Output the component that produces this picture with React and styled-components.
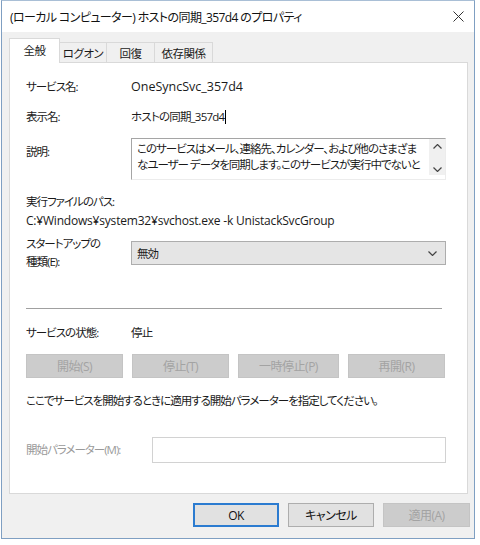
import React from "react";
import styled, { createGlobalStyle } from "styled-components";

const Global = createGlobalStyle`
  html, body { margin: 0; padding: 0; background: #ffffff; }
  body {
    font-family: "Open Sans", "Noto Sans CJK JP", sans-serif;
    font-size: 11.5px;
    font-feature-settings: "palt";
    letter-spacing: -1px;
    color: #1a1a1a;
  }
`;

const Window = styled.div`
  box-sizing: border-box;
  margin-left: 1px;
  width: 474px;
  height: 539px;
  border: 1px solid #7f9fc2;
  border-top-color: #a9bfd6;
  display: flex;
  flex-direction: column;
  background: #fff;
`;

const TitleBar = styled.div`
  height: 31px;
  flex: none;
  display: flex;
  align-items: center;
  justify-content: space-between;
  padding: 0 10px 0 8px;
  font-size: 12px;
  letter-spacing: -0.6px;
  color: #111;
`;

const Body = styled.div`
  flex: 1;
  background: #f0f0f0;
  padding: 7px 6px 0 7px;
  display: flex;
  flex-direction: column;
`;

const TabRow = styled.div`
  display: flex;
  align-items: flex-end;
  height: 24px;
  margin-bottom: -1px;
  position: relative;
  z-index: 1;
`;

const Tab = styled.div`
  box-sizing: border-box;
  height: ${(p) => (p.$active ? 25 : 21)}px;
  width: ${(p) => p.$w}px;
  display: flex;
  align-items: center;
  justify-content: center;
  padding-bottom: ${(p) => (p.$active ? 2 : 0)}px;
  background: ${(p) => (p.$active ? "#ffffff" : "#f0f0f0")};
  border: 1px solid #d9d9d9;
  border-bottom: ${(p) => (p.$active ? "none" : "1px solid #d9d9d9")};
  margin-left: ${(p) => (p.$first ? 0 : -1)}px;
  font-size: 11.5px;
  letter-spacing: -0.5px;
`;

const Panel = styled.div`
  box-sizing: border-box;
  height: 432px;
  background: #ffffff;
  border: 1px solid #d9d9d9;
  padding: 14px 21px 0 16px;
  display: flex;
  flex-direction: column;
`;

const InfoRow = styled.div`
  display: grid;
  grid-template-columns: ${(p) => p.$label || 105}px 1fr;
  align-items: ${(p) => p.$align || "center"};
  min-height: 20px;
  margin-top: ${(p) => p.$mt || 0}px;
`;

const Label = styled.div`
  line-height: 18px;
  padding-top: ${(p) => p.$pt || 0}px;
  color: ${(p) => (p.$disabled ? "#9a9a9a" : "inherit")};
`;

const Value = styled.div`
  line-height: 18px;
  display: flex;
  align-items: center;
  font-size: ${(p) => (p.$latin ? 12.5 : 11.5)}px;
  letter-spacing: ${(p) => (p.$latin ? "0" : "-0.8px")};
`;

const Caret = styled.span`
  display: inline-block;
  width: 1px;
  height: 14px;
  background: #000;
  margin-left: 1px;
`;

const TextBox = styled.div`
  box-sizing: border-box;
  height: 42px;
  display: flex;
  border-top: 1px solid #a5a5a5;
  border-left: 1px solid #a5a5a5;
  border-right: 1px solid #ececec;
  border-bottom: 1px solid #ececec;
`;

const TextContent = styled.div`
  flex: 1;
  padding: 2px 4px 0 5px;
  line-height: 16px;
  white-space: nowrap;
  overflow: hidden;
`;

const ScrollCol = styled.div`
  width: 16px;
  height: 36px;
  background: #f0f0f0;
  display: flex;
  flex-direction: column;
  align-items: center;
  justify-content: space-between;
  padding: 5px 0 3px;
  box-sizing: border-box;
`;

const Line = styled.div`
  line-height: 18px;
  margin-top: ${(p) => p.$mt || 0}px;
  font-size: ${(p) => (p.$latin ? 12 : 11.5)}px;
  letter-spacing: ${(p) => (p.$latin ? "-0.2px" : "-1px")};
  white-space: nowrap;
`;

const Select = styled.div`
  box-sizing: border-box;
  height: 24px;
  background: #e5e5e5;
  border: 1px solid #adadad;
  display: flex;
  align-items: center;
  justify-content: space-between;
  padding: 0 8px 0 5px;
`;

const Separator = styled.div`
  height: 1px;
  width: 416px;
  background: #a0a0a0;
  margin-top: ${(p) => p.$mt}px;
`;

const ButtonRow = styled.div`
  display: flex;
  gap: 9px;
  margin-top: ${(p) => p.$mt || 0}px;
`;

const Button = styled.div`
  box-sizing: border-box;
  width: ${(p) => p.$w}px;
  height: 24px;
  display: flex;
  align-items: center;
  justify-content: center;
  font-size: 12px;
  letter-spacing: -0.5px;
  background: ${(p) => (p.$disabled ? "#cccccc" : "#e1e1e1")};
  color: ${(p) => (p.$disabled ? "#a3a3a3" : "#111")};
  border: ${(p) =>
    p.$default
      ? "2px solid #2b7bd0"
      : p.$disabled
      ? "1px solid #c4c4c4"
      : "1px solid #adadad"};
`;

const Input = styled.div`
  box-sizing: border-box;
  height: 26px;
  border: 1px solid #d2d2d2;
  background: #fff;
`;

const Footer = styled.div`
  display: flex;
  justify-content: flex-end;
  gap: 9px;
  margin: 9px -2px 0 0;
`;

const CloseIcon = () => (
  <svg width="11" height="11" viewBox="0 0 11 11">
    <path d="M0.5 0.5 L10.5 10.5 M10.5 0.5 L0.5 10.5" stroke="#333" strokeWidth="1" fill="none" />
  </svg>
);

const Chevron = ({ up }) => (
  <svg width="9" height="5" viewBox="0 0 9 5">
    <path
      d={up ? "M0.5 4.5 L4.5 0.5 L8.5 4.5" : "M0.5 0.5 L4.5 4.5 L8.5 0.5"}
      stroke="#444"
      strokeWidth="1.2"
      fill="none"
    />
  </svg>
);

export default function App() {
  return (
    <>
      <Global />
      <Window>
        <TitleBar>
          <span>(ローカル コンピューター) ホストの同期_357d4 のプロパティ</span>
          <CloseIcon />
        </TitleBar>
        <Body>
          <TabRow>
            <Tab $active $first $w={51}>全般</Tab>
            <Tab $w={48}>ログオン</Tab>
            <Tab $w={49}>回復</Tab>
            <Tab $w={59}>依存関係</Tab>
          </TabRow>
          <Panel>
            <InfoRow>
              <Label>サービス名:</Label>
              <Value $latin>OneSyncSvc_357d4</Value>
            </InfoRow>
            <InfoRow $mt={10}>
              <Label>表示名:</Label>
              <Value>
                ホストの同期_357d4
                <Caret />
              </Value>
            </InfoRow>
            <InfoRow $mt={11} $align="start">
              <Label $pt={5}>説明:</Label>
              <TextBox>
                <TextContent>
                  このサービスはメール、連絡先、カレンダー、および他のさまざま
                  <br />
                  なユーザー データを同期します。このサービスが実行中でないと
                </TextContent>
                <ScrollCol>
                  <Chevron up />
                  <Chevron />
                </ScrollCol>
              </TextBox>
            </InfoRow>
            <Line $mt={13}>実行ファイルのパス:</Line>
            <Line $mt={1} $latin>C:¥Windows¥system32¥svchost.exe -k UnistackSvcGroup</Line>
            <InfoRow $mt={5}>
              <Label>
                スタートアップの
                <br />
                種類(E):
              </Label>
              <Select>
                <span>無効</span>
                <Chevron />
              </Select>
            </InfoRow>
            <Separator $mt={37} />
            <InfoRow $mt={14}>
              <Label>サービスの状態:</Label>
              <Value>停止</Value>
            </InfoRow>
            <ButtonRow $mt={11}>
              <Button $disabled $w={97}>開始(S)</Button>
              <Button $disabled $w={97}>停止(T)</Button>
              <Button $disabled $w={101}>一時停止(P)</Button>
              <Button $disabled $w={97}>再開(R)</Button>
            </ButtonRow>
            <Line $mt={14}>ここでサービスを開始するときに適用する開始パラメーターを指定してください。</Line>
            <InfoRow $mt={27} $label={126}>
              <Label $disabled>開始パラメーター(M):</Label>
              <Input />
            </InfoRow>
          </Panel>
          <Footer>
            <Button $default $w={86}>OK</Button>
            <Button $w={86}>キャンセル</Button>
            <Button $disabled $w={87}>適用(A)</Button>
          </Footer>
        </Body>
      </Window>
    </>
  );
}
